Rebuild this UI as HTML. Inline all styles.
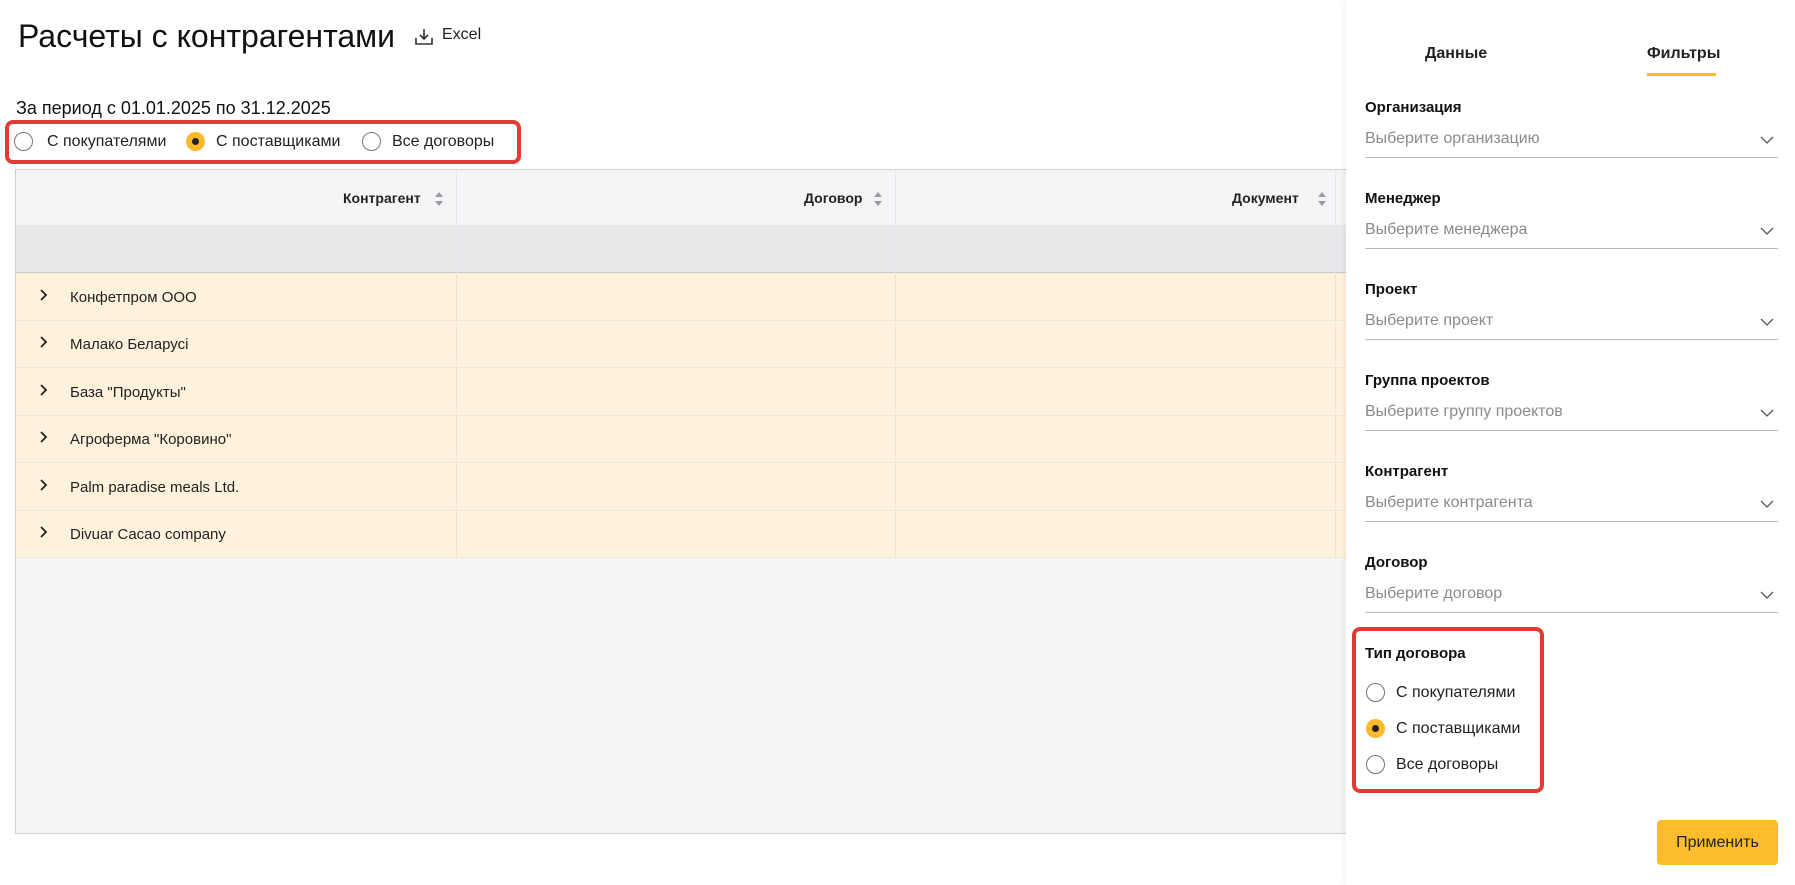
<!DOCTYPE html>
<html><head><meta charset="utf-8">
<style>
*{box-sizing:border-box;margin:0;padding:0}
body{width:1795px;height:885px;position:relative;background:#fff;font-family:"Liberation Sans","Noto Sans CJK SC",sans-serif;color:#1f1f24;overflow:hidden}
.abs{position:absolute}
.title{left:18px;top:18px;font-size:32px;color:#111}
.excel{left:442px;top:26px;font-size:16px}
.period{left:16px;top:98px;font-size:18px;color:#111}
.redbox{border:4px solid #e23c32;border-radius:8px}
.radio{width:19px;height:19px;border-radius:50%;border:1.5px solid #777;background:#fff}
.radio.on{background:#fbba2c;border-color:#fbba2c}
.radio.on::after{content:"";position:absolute;left:50%;top:50%;width:7px;height:7px;margin:-3.5px 0 0 -3.5px;border-radius:50%;background:#222}
.rl{font-size:16px;color:#222}
.table{left:15px;top:169px;width:1331px;height:665px;background:#f5f5f7;border:1px solid #cfcfd4;border-right:none}
.hdr{left:0;top:0;width:100%;height:55px;background:#f5f5f7}
.grp{left:0;top:55px;width:100%;height:48px;background:#e8e8eb;border-bottom:1px solid #c8c8cc}
.row{left:0;width:100%;height:47.5px;background:#fef2dc;border-bottom:1px solid #ece6da}
.vl{width:1px;background:#e3e3e6}
.ht{font-size:14px;font-weight:bold;color:#222}
.rt{font-size:15px;color:#222}
.chev{position:absolute;left:23px}
.panel{left:1346px;top:0;width:449px;height:885px;background:#fff;box-shadow:-2px 0 6px rgba(0,0,0,.06)}
.flab{font-size:15px;font-weight:bold;color:#111}
.fph{font-size:16px;color:#8a8a90}
.fline{height:1px;background:#b8b8bc;width:413px}
.btn{left:1657px;top:820px;width:121px;height:45px;background:#fbbd2b;border-radius:4px;font-size:16px;text-align:center;line-height:45px;color:#222}
</style></head><body>
<div class="abs title">Расчеты с контрагентами</div>
<svg class="abs" style="left:414px;top:28px" width="20" height="18" viewBox="0 0 20 18"><path d="M10 1v10M6 7l4 4 4-4M2 10v6h16v-6" fill="none" stroke="#333" stroke-width="1.6"/></svg>
<div class="abs excel">Excel</div>
<div class="abs period">За период с 01.01.2025 по 31.12.2025</div>
<div class="abs redbox" style="left:5px;top:120px;width:516px;height:44px"></div>
<div class="abs radio" style="left:14px;top:132px"></div><div class="abs rl" style="left:47px;top:133px">С покупателями</div>
<div class="abs radio on" style="left:186px;top:132px"></div><div class="abs rl" style="left:216px;top:133px">С поставщиками</div>
<div class="abs radio" style="left:362px;top:132px"></div><div class="abs rl" style="left:392px;top:133px">Все договоры</div>

<div class="abs table">
 <div class="abs hdr"></div>
 <div class="abs grp"></div>
 <div class="abs ht" style="left:327px;top:20px">Контрагент</div>
 <div class="abs ht" style="left:788px;top:20px">Договор</div>
 <div class="abs ht" style="left:1216px;top:20px">Документ</div>
 <svg class="abs" style="left:417px;top:21px" width="12" height="16"><path d="M2 6l4-5 4 5zM2 10l4 5 4-5z" fill="#9a9aa0"/></svg>
 <svg class="abs" style="left:856px;top:21px" width="12" height="16"><path d="M2 6l4-5 4 5zM2 10l4 5 4-5z" fill="#9a9aa0"/></svg>
 <svg class="abs" style="left:1300px;top:21px" width="12" height="16"><path d="M2 6l4-5 4 5zM2 10l4 5 4-5z" fill="#9a9aa0"/></svg>
 <div class="abs row" style="top:103px"></div>
 <div class="abs row" style="top:150.5px"></div>
 <div class="abs row" style="top:198px"></div>
 <div class="abs row" style="top:245.5px"></div>
 <div class="abs row" style="top:293px"></div>
 <div class="abs row" style="top:340.5px"></div>
 <div class="abs vl" style="left:440px;top:0;height:103px;background:#e6e6ea"></div>
 <div class="abs vl" style="left:879px;top:0;height:103px;background:#e6e6ea"></div>
 <div class="abs vl" style="left:1319px;top:0;height:103px;background:#e6e6ea"></div>
 <div class="abs vl" style="left:440px;top:103px;height:285px;background:#ece6da"></div>
 <div class="abs vl" style="left:879px;top:103px;height:285px;background:#ece6da"></div>
 <div class="abs vl" style="left:1319px;top:103px;height:285px;background:#ece6da"></div>
 <svg class="chev" style="top:118px" width="10" height="14"><path d="M2 2l5 5-5 5" fill="none" stroke="#222" stroke-width="1.8"/></svg><div class="abs rt" style="left:54px;top:119px">Конфетпром ООО</div>
 <svg class="chev" style="top:165px" width="10" height="14"><path d="M2 2l5 5-5 5" fill="none" stroke="#222" stroke-width="1.8"/></svg><div class="abs rt" style="left:54px;top:166px">Малако Беларусі</div>
 <svg class="chev" style="top:213px" width="10" height="14"><path d="M2 2l5 5-5 5" fill="none" stroke="#222" stroke-width="1.8"/></svg><div class="abs rt" style="left:54px;top:214px">База "Продукты"</div>
 <svg class="chev" style="top:260px" width="10" height="14"><path d="M2 2l5 5-5 5" fill="none" stroke="#222" stroke-width="1.8"/></svg><div class="abs rt" style="left:54px;top:261px">Агроферма "Коровино"</div>
 <svg class="chev" style="top:308px" width="10" height="14"><path d="M2 2l5 5-5 5" fill="none" stroke="#222" stroke-width="1.8"/></svg><div class="abs rt" style="left:54px;top:309px">Palm paradise meals Ltd.</div>
 <svg class="chev" style="top:355px" width="10" height="14"><path d="M2 2l5 5-5 5" fill="none" stroke="#222" stroke-width="1.8"/></svg><div class="abs rt" style="left:54px;top:356px">Divuar Cacao company</div>
</div>

<div class="abs panel"></div>
<div class="abs" style="left:1425px;top:45px;font-size:16px;font-weight:bold;color:#222">Данные</div>
<div class="abs" style="left:1647px;top:45px;font-size:16px;font-weight:bold;color:#222">Фильтры</div>
<div class="abs" style="left:1647px;top:73px;width:69px;height:3px;background:#fbba2c"></div>

<div class="abs flab" style="left:1365px;top:99px">Организация</div>
<div class="abs fph" style="left:1365px;top:130px">Выберите организацию</div>
<div class="abs fline" style="left:1365px;top:157px"></div>
<div class="abs flab" style="left:1365px;top:190px">Менеджер</div>
<div class="abs fph" style="left:1365px;top:221px">Выберите менеджера</div>
<div class="abs fline" style="left:1365px;top:248px"></div>
<div class="abs flab" style="left:1365px;top:281px">Проект</div>
<div class="abs fph" style="left:1365px;top:312px">Выберите проект</div>
<div class="abs fline" style="left:1365px;top:339px"></div>
<div class="abs flab" style="left:1365px;top:372px">Группа проектов</div>
<div class="abs fph" style="left:1365px;top:403px">Выберите группу проектов</div>
<div class="abs fline" style="left:1365px;top:430px"></div>
<div class="abs flab" style="left:1365px;top:463px">Контрагент</div>
<div class="abs fph" style="left:1365px;top:494px">Выберите контрагента</div>
<div class="abs fline" style="left:1365px;top:521px"></div>
<div class="abs flab" style="left:1365px;top:554px">Договор</div>
<div class="abs fph" style="left:1365px;top:585px">Выберите договор</div>
<div class="abs fline" style="left:1365px;top:612px"></div>
<svg class="abs" style="left:1759px;top:133px" width="16" height="480"><g fill="none" stroke="#555" stroke-width="1.3"><path d="M2 4l6 6 6-6"/><path d="M2 95l6 6 6-6"/><path d="M2 186l6 6 6-6"/><path d="M2 277l6 6 6-6"/><path d="M2 368l6 6 6-6"/><path d="M2 459l6 6 6-6"/></g></svg>

<div class="abs redbox" style="left:1352px;top:627px;width:192px;height:166px"></div>
<div class="abs flab" style="left:1365px;top:645px">Тип договора</div>
<div class="abs radio" style="left:1366px;top:683px"></div><div class="abs rl" style="left:1396px;top:684px">С покупателями</div>
<div class="abs radio on" style="left:1366px;top:719px"></div><div class="abs rl" style="left:1396px;top:720px">С поставщиками</div>
<div class="abs radio" style="left:1366px;top:755px"></div><div class="abs rl" style="left:1396px;top:756px">Все договоры</div>
<div class="abs btn">Применить</div>
</body></html>
